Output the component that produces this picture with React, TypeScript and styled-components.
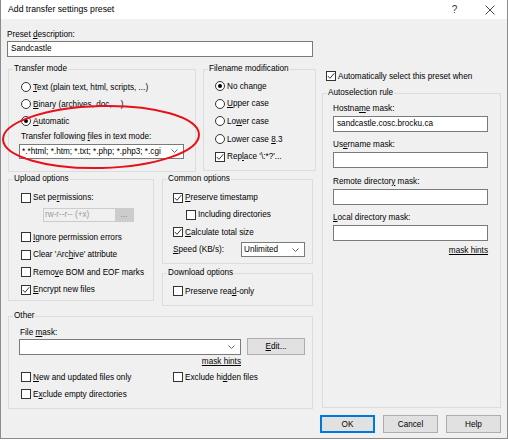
import React from "react";
import styled, { createGlobalStyle } from "styled-components";

const GlobalStyle = createGlobalStyle`
    html, body {
        margin: 0;
        padding: 0;
        background: #ffffff;
    }
    body {
        font-family: "Liberation Sans", Arial, sans-serif;
        font-size: 8.2px;
        color: #000000;
    }
    * {
        box-sizing: border-box;
    }
`;

const Window = styled.div`
    position: relative;
    width: 508px;
    height: 439px;
    display: flex;
    flex-direction: column;
    background: #f0f0f0;
    border: 1px solid #8c8c8c;
    border-top: none;
`;

const TitleBar = styled.div`
    height: 19px;
    flex: none;
    display: flex;
    align-items: center;
    background: #ffffff;
    padding-left: 7px;
`;

const Title = styled.span`
    font-size: 8.7px;
    line-height: 19px;
`;

const TitleButtons = styled.div`
    margin-left: auto;
    display: flex;
    height: 100%;
`;

const TitleButton = styled.div`
    width: 35px;
    height: 100%;
    display: flex;
    align-items: center;
    justify-content: center;
    font-size: 10px;
    color: #333;
`;

const Body = styled.div`
    flex: 1;
    display: flex;
    flex-direction: column;
    padding: 10px 6px 0 6px;
`;

const Main = styled.div`
    display: flex;
    align-items: flex-start;
`;

const LeftCol = styled.div`
    width: 309px;
    display: flex;
    flex-direction: column;
`;

const RightCol = styled.div`
    width: 179px;
    margin-left: 6px;
    display: flex;
    flex-direction: column;
`;

const Label = styled.div<{ $mt?: number; $ml?: number }>`
    height: 10px;
    line-height: 10px;
    white-space: nowrap;
    margin-top: ${(p) => p.$mt ?? 0}px;
    margin-left: ${(p) => p.$ml ?? 0}px;
`;

const TextBox = styled.input<{ $w: number; $mt?: number }>`
    width: ${(p) => p.$w}px;
    height: 16px;
    margin: ${(p) => p.$mt ?? 0}px 0 0 0;
    padding: 0 3px;
    border: 1px solid #7a7a7a;
    background: #ffffff;
    font: inherit;
    color: #000;
    outline: none;
`;

const Row = styled.div<{ $mt?: number; $ml?: number; $gap?: number }>`
    display: flex;
    align-items: flex-start;
    gap: ${(p) => p.$gap ?? 0}px;
    margin-top: ${(p) => p.$mt ?? 0}px;
    margin-left: ${(p) => p.$ml ?? 0}px;
`;

const Stack = styled.div<{ $gap?: number; $mt?: number }>`
    display: flex;
    flex-direction: column;
    gap: ${(p) => p.$gap ?? 0}px;
    margin-top: ${(p) => p.$mt ?? 0}px;
`;

const Group = styled.fieldset<{ $w: number; $h: number; $mt?: number; $ml?: number }>`
    width: ${(p) => p.$w}px;
    height: ${(p) => p.$h}px;
    min-width: 0;
    margin: ${(p) => p.$mt ?? 0}px 0 0 ${(p) => p.$ml ?? 0}px;
    padding: 0 4px;
    border: 1px solid #dcdcdc;
    flex: none;
`;

const Legend = styled.legend`
    padding: 0 1px;
    margin: 0;
    line-height: 10px;
    font-size: 8.2px;
    white-space: nowrap;
`;

const Inner = styled.div<{ $pl: number; $pt: number; $gap?: number }>`
    display: flex;
    flex-direction: column;
    align-items: flex-start;
    gap: ${(p) => p.$gap ?? 0}px;
    padding: ${(p) => p.$pt}px 0 0 ${(p) => p.$pl}px;
`;

const OptionRow = styled.div<{ $indent?: number }>`
    display: flex;
    align-items: center;
    height: 17px;
    white-space: nowrap;
    margin-left: ${(p) => p.$indent ?? 0}px;
`;

const RadioMark = styled.span<{ $on?: boolean }>`
    flex: none;
    width: 10px;
    height: 10px;
    margin-right: 2px;
    border: 1px solid #333333;
    border-radius: 50%;
    background: #ffffff;
    display: flex;
    align-items: center;
    justify-content: center;

    &::after {
        content: "";
        display: ${(p) => (p.$on ? "block" : "none")};
        width: 4px;
        height: 4px;
        border-radius: 50%;
        background: #000000;
    }
`;

const CheckMark = styled.span`
    flex: none;
    width: 10px;
    height: 10px;
    margin-right: 2px;
    border: 1px solid #333333;
    background: #ffffff;
    display: flex;

    svg {
        display: block;
    }
`;

const Combo = styled.div<{ $w: number; $h: number; $mt?: number; $ml?: number }>`
    width: ${(p) => p.$w}px;
    height: ${(p) => p.$h}px;
    margin-top: ${(p) => p.$mt ?? 0}px;
    margin-left: ${(p) => p.$ml ?? 0}px;
    flex: none;
    display: flex;
    align-items: center;
    border: 1px solid #7a7a7a;
    background: #ffffff;
    padding-left: 2px;

    span {
        flex: 1;
        overflow: hidden;
        white-space: nowrap;
    }

    svg {
        flex: none;
        margin: 0 5px 0 3px;
    }
`;

const PermField = styled.div`
    width: 91px;
    height: 14px;
    margin: 1.5px 0 7px 22px;
    display: flex;
    border: 1px solid #cccccc;
    background: #f0f0f0;
    color: #9a9a9a;

    span {
        flex: 1;
        line-height: 12px;
        padding-left: 1px;
        white-space: nowrap;
    }
`;

const PermButton = styled.div`
    width: 18px;
    background: #cccccc;
    text-align: center;
    line-height: 11px;
    color: #8a8a8a;
`;

const Button = styled.button<{ $w: number; $h: number; $primary?: boolean }>`
    width: ${(p) => p.$w}px;
    height: ${(p) => p.$h}px;
    flex: none;
    margin: 0;
    padding: 0;
    font: inherit;
    color: #000;
    background: #e1e1e1;
    border: 1px solid ${(p) => (p.$primary ? "#0078d7" : "#adadad")};
    box-shadow: ${(p) => (p.$primary ? "inset 0 0 0 1px #0078d7" : "none")};
`;

const Hint = styled.div<{ $w: number; $mt?: number }>`
    width: ${(p) => p.$w}px;
    margin-top: ${(p) => p.$mt ?? 0}px;
    line-height: 10px;
    text-align: right;
    text-decoration: underline;
`;

const SpeedLabel = styled.span`
    width: 68px;
    white-space: nowrap;
`;

const Buttons = styled.div`
    display: flex;
    justify-content: flex-end;
    gap: 8px;
    margin-top: 6px;
`;

const Annotation = styled.svg`
    position: absolute;
    left: -1px;
    top: 100px;
    width: 210px;
    height: 80px;
    overflow: visible;
    pointer-events: none;
`;

const Chevron = () => (
    <svg width="7" height="4" viewBox="0 0 7 4">
        <path d="M0.5 0.5 L3.5 3.5 L6.5 0.5" fill="none" stroke="#555" strokeWidth="0.9" />
    </svg>
);

const Tick = () => (
    <svg width="8" height="8" viewBox="0 0 8 8">
        <path d="M0.8 4 L3 6.3 L7.3 1.2" fill="none" stroke="#222" strokeWidth="0.9" />
    </svg>
);

const CloseIcon = () => (
    <svg width="10" height="10" viewBox="0 0 10 10">
        <path d="M0.5 0.5 L9.5 9.5 M9.5 0.5 L0.5 9.5" stroke="#333" strokeWidth="0.9" />
    </svg>
);

type OptionProps = {
    kind: "radio" | "check";
    on?: boolean;
    indent?: number;
    children: React.ReactNode;
};

const Option = ({ kind, on, indent, children }: OptionProps) => (
    <OptionRow $indent={indent}>
        {kind === "radio" ? (
            <RadioMark $on={on} />
        ) : (
            <CheckMark>{on && <Tick />}</CheckMark>
        )}
        <span>{children}</span>
    </OptionRow>
);

// only the part that shows in the box
const textMask = "*.*html; *.htm; *.txt; *.php; *.php3; *.cgi";

const MaskField = ({ label, value, first }: { label: React.ReactNode; value?: string; first?: boolean }) => (
    <Stack $mt={first ? 0 : 8.5}>
        <Label>{label}</Label>
        <TextBox $w={155} $mt={2} defaultValue={value ?? ""} readOnly />
    </Stack>
);

export default function App() {
    return (
        <>
            <GlobalStyle />
            <Window>
                <TitleBar>
                    <Title>Add transfer settings preset</Title>
                    <TitleButtons>
                        <TitleButton>?</TitleButton>
                        <TitleButton>
                            <CloseIcon />
                        </TitleButton>
                    </TitleButtons>
                </TitleBar>
                <Body>
                    <Main>
                        <LeftCol>
                            <Label $mt={0.5}>
                                Preset <u>d</u>escription:
                            </Label>
                            <TextBox $w={306} $mt={1} defaultValue="Sandcastle" readOnly />

                            <Row $mt={7.5} $ml={1} $gap={7}>
                                <Group $w={188} $h={108}>
                                    <Legend>Transfer mode</Legend>
                                    <Inner $pl={8} $pt={4.5}>
                                        <Option kind="radio">
                                            <u>T</u>ext (plain text, html, scripts, ...)
                                        </Option>
                                        <Option kind="radio">
                                            <u>B</u>inary (archives, doc, ...)
                                        </Option>
                                        <Option kind="radio" on>
                                            <u>A</u>utomatic
                                        </Option>
                                        <Label $mt={2}>
                                            Transfer following <u>f</u>iles in text mode:
                                        </Label>
                                        <Combo $w={165} $h={15} $mt={2} $ml={-2}>
                                            <span>{textMask}</span>
                                            <Chevron />
                                        </Combo>
                                    </Inner>
                                </Group>
                                <Group $w={113} $h={107}>
                                    <Legend>Filename modification</Legend>
                                    <Inner $pl={7} $pt={3.5} $gap={0.7}>
                                        <Option kind="radio" on>
                                            No change
                                        </Option>
                                        <Option kind="radio">
                                            <u>U</u>pper case
                                        </Option>
                                        <Option kind="radio">
                                            Lo<u>w</u>er case
                                        </Option>
                                        <Option kind="radio">
                                            Lower case <u>8</u>.3
                                        </Option>
                                        <Option kind="check" on>
                                            Rep<u>l</u>ace '\:*?'...
                                        </Option>
                                    </Inner>
                                </Group>
                            </Row>

                            <Row $mt={2} $ml={1} $gap={8}>
                                <Group $w={146} $h={127}>
                                    <Legend>Upload options</Legend>
                                    <Inner $pl={8} $pt={5}>
                                        <Option kind="check">
                                            Set pe<u>r</u>missions:
                                        </Option>
                                        <PermField>
                                            <span>rw-r--r-- (+x)</span>
                                            <PermButton>...</PermButton>
                                        </PermField>
                                        <Stack $gap={0.5}>
                                            <Option kind="check">
                                                <u>I</u>gnore permission errors
                                            </Option>
                                            <Option kind="check">
                                                Clear 'Arc<u>h</u>ive' attribute
                                            </Option>
                                            <Option kind="check">
                                                Remo<u>v</u>e BOM and EOF marks
                                            </Option>
                                            <Option kind="check" on>
                                                <u>E</u>ncrypt new files
                                            </Option>
                                        </Stack>
                                    </Inner>
                                </Group>
                                <Stack>
                                    <Group $w={151} $h={90}>
                                        <Legend>Common options</Legend>
                                        <Inner $pl={6} $pt={5} $gap={0.4}>
                                            <Option kind="check" on>
                                                <u>P</u>reserve timestamp
                                            </Option>
                                            <Option kind="check" indent={13}>
                                                Including directories
                                            </Option>
                                            <Option kind="check" on>
                                                <u>C</u>alculate total size
                                            </Option>
                                            <OptionRow>
                                                <SpeedLabel>
                                                    <u>S</u>peed (KB/s):
                                                </SpeedLabel>
                                                <Combo $w={64} $h={15}>
                                                    <span>Unlimited</span>
                                                    <Chevron />
                                                </Combo>
                                            </OptionRow>
                                        </Inner>
                                    </Group>
                                    <Group $w={151} $h={38} $mt={4}>
                                        <Legend>Download options</Legend>
                                        <Inner $pl={6} $pt={4.5}>
                                            <Option kind="check">
                                                Preserve rea<u>d</u>-only
                                            </Option>
                                        </Inner>
                                    </Group>
                                </Stack>
                            </Row>

                            <Group $w={305} $h={98} $mt={5} $ml={1}>
                                <Legend>Other</Legend>
                                <Inner $pl={6} $pt={7}>
                                    <Label $ml={1}>
                                        File <u>m</u>ask:
                                    </Label>
                                    <Row $gap={6} $mt={0}>
                                        <Combo $w={222} $h={16} $mt={0.5}>
                                            <span />
                                            <Chevron />
                                        </Combo>
                                        <Button $w={58} $h={17}>
                                            <u>E</u>dit...
                                        </Button>
                                    </Row>
                                    <Hint $w={222} $mt={2}>
                                        mask hints
                                    </Hint>
                                    <Row $ml={2} $mt={1.5}>
                                        <Stack>
                                            <div style={{ width: 152 }}>
                                                <Option kind="check">
                                                    <u>N</u>ew and updated files only
                                                </Option>
                                            </div>
                                            <Option kind="check">
                                                E<u>x</u>clude empty directories
                                            </Option>
                                        </Stack>
                                        <Option kind="check">
                                            Exclude hi<u>d</u>den files
                                        </Option>
                                    </Row>
                                </Inner>
                            </Group>
                        </LeftCol>

                        <RightCol>
                            <Row $mt={38.5} $ml={4}>
                                <Option kind="check" on>
                                    Automatically select this preset when
                                </Option>
                            </Row>
                            <Group $w={179} $h={320} $mt={3.5}>
                                <Legend>Autoselection rule</Legend>
                                <Inner $pl={6} $pt={5.5}>
                                    <MaskField
                                        first
                                        label={
                                            <>
                                                Hostna<u>m</u>e mask:
                                            </>
                                        }
                                        value="sandcastle.cosc.brocku.ca"
                                    />
                                    <MaskField
                                        label={
                                            <>
                                                Us<u>e</u>rname mask:
                                            </>
                                        }
                                    />
                                    <MaskField
                                        label={
                                            <>
                                                Remote director<u>y</u> mask:
                                            </>
                                        }
                                    />
                                    <MaskField
                                        label={
                                            <>
                                                <u>L</u>ocal directory mask:
                                            </>
                                        }
                                    />
                                    <Hint $w={155} $mt={4.5}>
                                        mask hints
                                    </Hint>
                                </Inner>
                            </Group>
                        </RightCol>
                    </Main>

                    <Buttons>
                        <Button $w={55} $h={18} $primary>
                            OK
                        </Button>
                        <Button $w={55} $h={18}>
                            Cancel
                        </Button>
                        <Button $w={55} $h={18}>
                            Help
                        </Button>
                    </Buttons>
                </Body>

                <Annotation viewBox="0 0 210 80">
                    <ellipse
                        cx="101"
                        cy="37"
                        rx="98"
                        ry="31"
                        fill="none"
                        stroke="#e8101a"
                        strokeWidth="2"
                        transform="rotate(-1.5 101 37)"
                    />
                </Annotation>
            </Window>
        </>
    );
}
